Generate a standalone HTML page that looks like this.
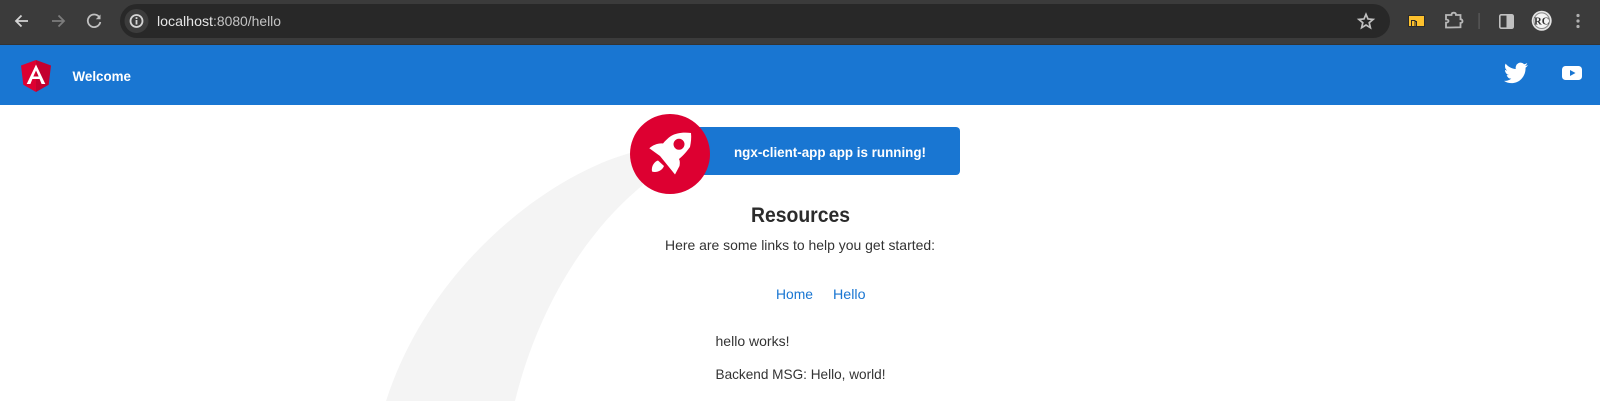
<!DOCTYPE html>
<html><head><meta charset="utf-8"><title>Hello</title>
<style>
html,body{margin:0;padding:0;background:#fff;width:1600px;height:401px;overflow:hidden}
svg{display:block}
text{font-family:"Liberation Sans",sans-serif}
</style></head><body>
<svg xmlns="http://www.w3.org/2000/svg" width="1600" height="401" viewBox="0 0 1600 401">
<rect width="1600" height="401" fill="#fff"/>
<!-- browser chrome -->
<rect width="1600" height="45" fill="#3b3b3b"/>
<rect y="44" width="1600" height="1" fill="#333"/>
<rect x="120" y="4" width="1270" height="34" rx="17" fill="#282828"/>
<circle cx="136.5" cy="21" r="12" fill="#3c3c3c"/>
<g fill="none" stroke="#d4d4d4" stroke-width="1.8">
<path d="M28 21H16.5M21.5 15.5L16 21l5.5 5.500"/>
<path d="M52 21h11.5M58.5 15.500L64 21l-5.500 5.500" stroke="#7c7c7c"/>
<path d="M99.500 17.500A6.300 6.300 0 1 0 100.300 22" stroke="#c0c0c0"/>
<circle cx="136.5" cy="21" r="6"/>
</g>
<path d="M100.500 14.500v4.700h-4.700z" fill="#c0c0c0"/>
<rect x="135.600" y="20" width="1.800" height="4.500" fill="#d4d4d4"/><rect x="135.600" y="17.200" width="1.800" height="1.800" fill="#d4d4d4"/>
<text x="157" y="26" font-size="14" fill="#e6e6e6" textLength="56" lengthAdjust="spacingAndGlyphs">localhost</text>
<text x="213" y="26" font-size="14" fill="#c4c4c4" textLength="68" lengthAdjust="spacingAndGlyphs">:8080/hello</text>
<path d="M1366 14.300l2 4.700 5.100.4-3.900 3.300 1.200 5-4.400-2.700-4.400 2.700 1.200-5-3.900-3.300 5.100-.4z" fill="none" stroke="#c0c0c0" stroke-width="1.700"/>
<rect x="1408.500" y="15.500" width="16" height="11" fill="#fdc12d" stroke="#2b2b2b" stroke-width="1"/>
<path d="M1411.500 26v-5.500h3.500v5.500M1415 21.500h1.500v4.500" fill="none" stroke="#2b2b2b" stroke-width="1"/>
<path d="M1451 15h-5v4.500c2 0 2.500 1 2.500 1.500s-.5 1.700-2.500 1.700v4.800h4.500l10-.2v-4.300c1.500 0 2-1 2-1.800s-.5-2-2-2V15h-4.500c0-1.500-.8-2.300-2.200-2.300s-2.300.8-2.300 2.300z" fill="none" stroke="#b8b8b8" stroke-width="1.800"/>
<rect x="1478.500" y="13" width="1.200" height="16" fill="#5d5d5d"/>
<rect x="1499.800" y="14.800" width="13.400" height="13.400" rx="1.500" fill="none" stroke="#c0c0c0" stroke-width="1.600"/>
<rect x="1506.500" y="14.800" width="6.700" height="13.400" fill="#c0c0c0"/>
<circle cx="1541.700" cy="20.700" r="10" fill="#e4e4e4"/>
<circle cx="1541.700" cy="20.700" r="7.800" fill="#f4f4f4" stroke="#888" stroke-width="1"/>
<text x="1541.700" y="24.500" font-size="10.500" font-weight="bold" text-anchor="middle" fill="#333" style="font-family:'Liberation Serif',serif">RC</text>
<g fill="#b0b0b0"><circle cx="1578" cy="15.500" r="1.600"/><circle cx="1578" cy="21" r="1.600"/><circle cx="1578" cy="26.500" r="1.600"/></g>
<!-- app header -->
<rect y="45" width="1600" height="60" fill="#1976d2"/>
<path d="M36 60L21 65.500l2.300 19.200L36 92z" fill="#dd0031"/>
<path d="M36 60l15 5.500-2.300 19.200L36 92z" fill="#c3002f"/>
<path fill-rule="evenodd" fill="#fff" d="M36 64.500L26.700 84h3.700l2-5h7.200l2 5h3.700zM36 70.500l2.700 6h-5.400z"/>
<text x="72.500" y="81" font-size="13.500" font-weight="bold" fill="#fff" textLength="58.500" lengthAdjust="spacingAndGlyphs">Welcome</text>
<g transform="translate(1504 60.300) scale(1 1.050)"><path fill="#fff" d="M23.953 4.570a10 10 0 01-2.825.775 4.958 4.958 0 002.163-2.723c-.951.555-2.005.959-3.127 1.184a4.920 4.920 0 00-8.384 4.482C7.690 8.095 4.067 6.130 1.640 3.162a4.822 4.822 0 00-.666 2.475c0 1.710.870 3.213 2.188 4.096a4.904 4.904 0 01-2.228-.616v.060a4.923 4.923 0 003.946 4.827 4.996 4.996 0 01-2.212.085 4.936 4.936 0 004.604 3.417 9.867 9.867 0 01-6.102 2.105c-.390 0-.779-.023-1.170-.067a13.995 13.995 0 007.557 2.209c9.053 0 13.998-7.496 13.998-13.985 0-.210 0-.420-.015-.630A9.935 9.935 0 0024 4.590z"/></g>
<rect x="1562" y="66" width="20" height="14" rx="3.500" fill="#fff"/>
<path d="M1570 70v6l5.500-3z" fill="#1976d2"/>
<!-- smoke trail -->
<path d="M630 153C548 176 430 265 386 401H515C540 300 592 226 643 185Z" fill="#f4f4f4"/>
<!-- banner -->
<path d="M670 127H956a4 4 0 0 1 4 4V171a4 4 0 0 1-4 4H670z" fill="#1976d2"/>
<text x="734" y="157" font-size="14" font-weight="bold" fill="#fff" textLength="192" lengthAdjust="spacingAndGlyphs">ngx-client-app app is running!</text>
<circle cx="670" cy="154" r="40" fill="#dd0031"/>
<path fill="#fff" fill-rule="evenodd" d="M691 133C683 132 676 133 671 136C668 138 665 141 663 143.500C658 143 653 145 649.300 148.300L660 156L675 174.500L679.500 166C680 163 680 161 679 159C684 155 687 151 690 147C691 142 691.500 138 691 133ZM679 138.800a5.500 5.500 0 1 0 .01 0Z"/>
<path fill="#fff" d="M652 171.500C651 166 654.500 161.500 658 160.500L664 166C662 171 656 173 652 171.500Z"/>
<!-- text -->
<text x="751" y="222" font-size="21" font-weight="bold" fill="#2b2b2b" textLength="99" lengthAdjust="spacingAndGlyphs">Resources</text>
<text x="665" y="250" font-size="14" fill="#333" textLength="270" lengthAdjust="spacingAndGlyphs">Here are some links to help you get started:</text>
<text x="776" y="299" font-size="14" fill="#1976d2" textLength="37" lengthAdjust="spacingAndGlyphs">Home</text>
<text x="833" y="299" font-size="14" fill="#1976d2" textLength="32.500" lengthAdjust="spacingAndGlyphs">Hello</text>
<text x="715.500" y="346" font-size="14" fill="#333" textLength="74" lengthAdjust="spacingAndGlyphs">hello works!</text>
<text x="715.500" y="379" font-size="14" fill="#333" textLength="170" lengthAdjust="spacingAndGlyphs">Backend MSG: Hello, world!</text>
</svg>
</body></html>
